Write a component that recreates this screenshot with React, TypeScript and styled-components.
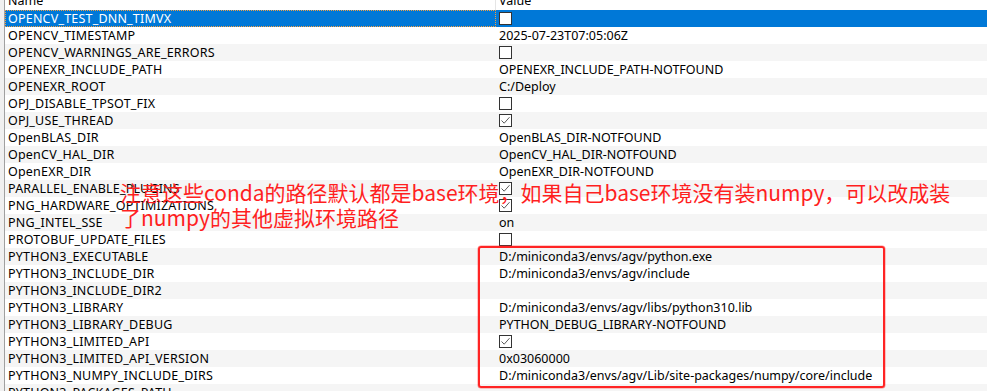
import React from 'react'
import styled, { createGlobalStyle } from 'styled-components'

const GlobalStyle = createGlobalStyle`
  html, body {
    margin: 0;
    padding: 0;
    background: #fff;
    overflow: hidden;
  }
`

const Frame = styled.div`
  position: relative;
  display: flex;
  width: 987px;
  height: 391px;
  overflow: hidden;
  background: #fff;
  font-family: 'Noto Sans', 'Noto Sans CJK SC', sans-serif;
  font-size: 12.5px;
  color: #000;
`

const Gutter = styled.div`
  flex: none;
  width: 4px;
  background: #f0f0f0;
  border-right: 1px solid #a0a0a0;
`

const Table = styled.div`
  flex: 1;
  display: flex;
  flex-direction: column;
  min-width: 0;
`

const Header = styled.div`
  display: grid;
  grid-template-columns: 491px 1fr;
  height: 10px;
  overflow: hidden;
  flex: none;
`

const HeaderCell = styled.div<{ $divider?: boolean }>`
  margin-top: -8px;
  padding-left: 3px;
  line-height: 17px;
  border-right: ${({ $divider }) => ($divider ? '1px solid #e5e5e5' : 'none')};
`

const Row = styled.div<{ $selected?: boolean; $alt?: boolean }>`
  display: grid;
  grid-template-columns: 491px 1fr;
  flex: none;
  height: 17px;
  background: ${({ $selected, $alt }) => ($selected ? '#0078d7' : $alt ? '#f5f5f5' : '#fff')};
  color: ${({ $selected }) => ($selected ? '#fff' : '#000')};
`

const NameCell = styled.div<{ $focused?: boolean }>`
  padding-left: 3px;
  line-height: 17px;
  letter-spacing: 0.2px;
  white-space: nowrap;
  overflow: hidden;
  outline: ${({ $focused }) => ($focused ? '1px dotted #f5a040' : 'none')};
  outline-offset: -1px;
`

const ValueCell = styled.div`
  display: flex;
  align-items: center;
  padding-left: 3px;
  line-height: 17px;
  white-space: nowrap;
  overflow: hidden;
`

const Box = styled.span`
  display: inline-flex;
  align-items: center;
  justify-content: center;
  box-sizing: border-box;
  width: 13px;
  height: 13px;
  background: #fff;
  border: 1px solid #333;
`

const Note = styled.div`
  position: absolute;
  left: 120px;
  top: 180px;
  font-family: 'Noto Sans CJK SC', 'Noto Sans', sans-serif;
  font-size: 21px;
  line-height: 25px;
  color: #ff1f1f;
  white-space: nowrap;
`

const Highlight = styled.div`
  position: absolute;
  left: 478px;
  top: 246px;
  width: 407px;
  height: 142px;
  box-sizing: border-box;
  border: 2px solid #ff2424;
  border-radius: 3px;
  box-shadow: 0 0 0 0.5px rgba(255, 40, 40, 0.5);
`

type Value = string | { checked: boolean }

const rows: [string, Value][] = [
  ['OPENCV_TEST_DNN_TIMVX', { checked: false }],
  ['OPENCV_TIMESTAMP', '2025-07-23T07:05:06Z'],
  ['OPENCV_WARNINGS_ARE_ERRORS', { checked: false }],
  ['OPENEXR_INCLUDE_PATH', 'OPENEXR_INCLUDE_PATH-NOTFOUND'],
  ['OPENEXR_ROOT', 'C:/Deploy'],
  ['OPJ_DISABLE_TPSOT_FIX', { checked: false }],
  ['OPJ_USE_THREAD', { checked: true }],
  ['OpenBLAS_DIR', 'OpenBLAS_DIR-NOTFOUND'],
  ['OpenCV_HAL_DIR', 'OpenCV_HAL_DIR-NOTFOUND'],
  ['OpenEXR_DIR', 'OpenEXR_DIR-NOTFOUND'],
  ['PARALLEL_ENABLE_PLUGINS', { checked: true }],
  ['PNG_HARDWARE_OPTIMIZATIONS', { checked: true }],
  ['PNG_INTEL_SSE', 'on'],
  ['PROTOBUF_UPDATE_FILES', { checked: false }],
  ['PYTHON3_EXECUTABLE', 'D:/miniconda3/envs/agv/python.exe'],
  ['PYTHON3_INCLUDE_DIR', 'D:/miniconda3/envs/agv/include'],
  ['PYTHON3_INCLUDE_DIR2', ''],
  ['PYTHON3_LIBRARY', 'D:/miniconda3/envs/agv/libs/python310.lib'],
  ['PYTHON3_LIBRARY_DEBUG', 'PYTHON_DEBUG_LIBRARY-NOTFOUND'],
  ['PYTHON3_LIMITED_API', { checked: true }],
  ['PYTHON3_LIMITED_API_VERSION', '0x03060000'],
  ['PYTHON3_NUMPY_INCLUDE_DIRS', 'D:/miniconda3/envs/agv/Lib/site-packages/numpy/core/include'],
  ['PYTHON3_PACKAGES_PATH', ''],
]

const CheckBox = ({ checked }: { checked: boolean }) => (
  <Box>
    {checked && (
      <svg width="11" height="11" viewBox="0 0 11 11">
        <path d="M1.5 5.5 L4.2 8.2 L9.5 2.2" fill="none" stroke="#5a5a5a" strokeWidth="1" />
      </svg>
    )}
  </Box>
)

export default function App() {
  return (
    <>
      <GlobalStyle />
      <Frame>
        <Gutter />
        <Table>
          <Header>
            <HeaderCell $divider>Name</HeaderCell>
            <HeaderCell>Value</HeaderCell>
          </Header>
          {rows.map(([name, value], i) => (
            <Row key={name} $selected={i === 0} $alt={i % 2 === 0}>
              <NameCell $focused={i === 0}>{name}</NameCell>
              <ValueCell>
                {typeof value === 'string' ? value : <CheckBox checked={value.checked} />}
              </ValueCell>
            </Row>
          ))}
        </Table>
        <Note>
          注意这些conda的路径默认都是base环境，如果自己base环境没有装numpy，可以改成装
          <br />
          了numpy的其他虚拟环境路径
        </Note>
        <Highlight />
      </Frame>
    </>
  )
}
